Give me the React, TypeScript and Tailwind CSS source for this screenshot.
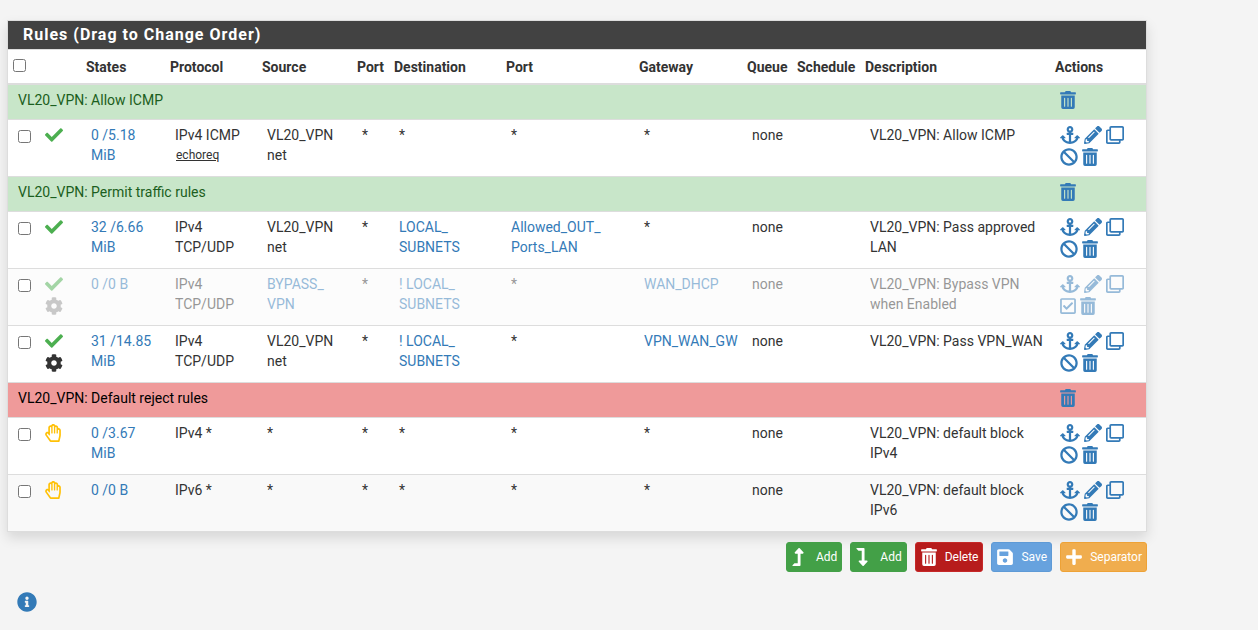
import { Fragment, PropsWithChildren } from 'react';
import { IconType } from 'react-icons';
import {
  FaAnchor,
  FaBan,
  FaCheck,
  FaCog,
  FaInfoCircle,
  FaLevelDownAlt,
  FaLevelUpAlt,
  FaPencilAlt,
  FaPlus,
  FaRegCheckSquare,
  FaRegClone,
  FaRegHandPaper,
  FaSave,
  FaTrashAlt,
} from 'react-icons/fa';

type Rule = {
  id: string;
  action: 'pass' | 'reject';
  advanced?: boolean;
  disabled?: boolean;
  striped?: boolean;
  states: string;
  protocol: string;
  icmpType?: string;
  source: string;
  sourceAlias?: boolean;
  destination: string;
  port: string;
  gateway: string;
  description: string;
};

type Group = {
  title: string;
  color: 'green' | 'red';
  rules: Rule[];
};

const groups: Group[] = [
  {
    title: 'VL20_VPN: Allow ICMP',
    color: 'green',
    rules: [
      { id: 'icmp', action: 'pass', states: '0 /5.18\nMiB', protocol: 'IPv4 ICMP', icmpType: 'echoreq', source: 'VL20_VPN\nnet', destination: '*', port: '*', gateway: '*', description: 'VL20_VPN: Allow ICMP' },
    ],
  },
  {
    title: 'VL20_VPN: Permit traffic rules',
    color: 'green',
    rules: [
      { id: 'lan', action: 'pass', states: '32 /6.66\nMiB', protocol: 'IPv4\nTCP/UDP', source: 'VL20_VPN\nnet', destination: 'LOCAL_\nSUBNETS', port: 'Allowed_OUT_\nPorts_LAN', gateway: '*', description: 'VL20_VPN: Pass approved\nLAN' },
      { id: 'bypass', action: 'pass', advanced: true, disabled: true, states: '0 /0 B', protocol: 'IPv4\nTCP/UDP', source: 'BYPASS_\nVPN', sourceAlias: true, destination: '! LOCAL_\nSUBNETS', port: '*', gateway: 'WAN_DHCP', description: 'VL20_VPN: Bypass VPN\nwhen Enabled' },
      { id: 'wan', action: 'pass', advanced: true, states: '31 /14.85\nMiB', protocol: 'IPv4\nTCP/UDP', source: 'VL20_VPN\nnet', destination: '! LOCAL_\nSUBNETS', port: '*', gateway: 'VPN_WAN_GW', description: 'VL20_VPN: Pass VPN_WAN' },
    ],
  },
  {
    title: 'VL20_VPN: Default reject rules',
    color: 'red',
    rules: [
      { id: 'block4', action: 'reject', states: '0 /3.67\nMiB', protocol: 'IPv4 *', source: '*', destination: '*', port: '*', gateway: '*', description: 'VL20_VPN: default block\nIPv4' },
      { id: 'block6', action: 'reject', striped: true, states: '0 /0 B', protocol: 'IPv6 *', source: '*', destination: '*', port: '*', gateway: '*', description: 'VL20_VPN: default block\nIPv6' },
    ],
  },
];

const IconLink = ({ icon: Icon, label, width = 'w-[18px]' }: { icon: IconType; label: string; width?: string }) => (
  <a href="#" title={label} aria-label={label} className="text-[#337ab7]">
    <Icon className={`block h-[18px] ${width}`} />
  </a>
);

const Head = ({ children }: PropsWithChildren) => (
  <th className="px-[5px] pt-[7px] pb-[6px] text-left font-bold">{children}</th>
);

const Cell = ({ children, faded }: PropsWithChildren<{ faded?: boolean }>) => (
  <td className={`pt-[5px] pl-2.5 align-top whitespace-pre-line ${faded ? 'opacity-50' : ''}`}>{children}</td>
);

// Aliases and gateways link to their own page, a plain "*" does not
const Value = ({ text, link = text !== '*' }: { text: string; link?: boolean }) =>
  link ? <a href="#" className="text-[#337ab7]">{text}</a> : <>{text}</>;

const RuleRow = ({ rule }: { rule: Rule }) => (
  <tr className={`h-[57px] border-t border-[#ddd] ${rule.disabled ? 'bg-[#fcfcfc]' : rule.striped ? 'bg-[#f9f9f9]' : 'bg-white'}`}>
    <td className="pt-[10px] pl-2.5 align-top">
      <input type="checkbox" aria-label={`Select ${rule.description}`} className="block size-[13px]" />
    </td>
    <td className={`pt-[6px] pl-2.5 align-top ${rule.disabled ? 'opacity-50' : ''}`}>
      <div className="flex flex-col items-start gap-1">
        {rule.action === 'pass'
          ? <FaCheck className="size-[18px] text-[#4caf50]" />
          : <FaRegHandPaper className="h-[18px] w-4 text-[#ffc107]" />}
        {rule.advanced && <FaCog className={`size-[18px] text-[#333] ${rule.disabled ? 'opacity-50' : ''}`} />}
      </div>
    </td>
    <Cell faded={rule.disabled}><Value text={rule.states} /></Cell>
    <Cell faded={rule.disabled}>
      {rule.protocol}
      {rule.icmpType && <div className="pl-px text-xs leading-5 underline">{rule.icmpType}</div>}
    </Cell>
    <Cell faded={rule.disabled}><Value text={rule.source} link={!!rule.sourceAlias} /></Cell>
    <Cell faded={rule.disabled}>*</Cell>
    <Cell faded={rule.disabled}><Value text={rule.destination} /></Cell>
    <Cell faded={rule.disabled}><Value text={rule.port} /></Cell>
    <Cell faded={rule.disabled}><Value text={rule.gateway} /></Cell>
    <Cell faded={rule.disabled}>none</Cell>
    <Cell faded={rule.disabled} />
    <Cell faded={rule.disabled}>{rule.description}</Cell>
    <td className={`pt-[6px] pr-2 pl-2.5 align-top ${rule.disabled ? 'opacity-50' : ''}`}>
      <div className="flex flex-wrap gap-1">
        <IconLink icon={FaAnchor} width="w-5" label="Move checked rules above this one" />
        <IconLink icon={FaPencilAlt} label="Edit" />
        <IconLink icon={FaRegClone} label="Copy" />
        {rule.disabled
          ? <IconLink icon={FaRegCheckSquare} width="w-4" label="Enable" />
          : <IconLink icon={FaBan} label="Disable" />}
        <IconLink icon={FaTrashAlt} width="w-4" label="Delete this rule" />
      </div>
    </td>
  </tr>
);

const ActionButton = ({ icon: Icon, width = 'w-4', className, children }: PropsWithChildren<{ icon: IconType; width?: string; className: string }>) => (
  <button type="button" className={`flex h-[30px] items-center gap-2 rounded-[3px] border pr-1 pl-[5px] text-xs text-white ${className}`}>
    <span className="w-4">
      <Icon className={`h-[18px] ${width}`} />
    </span>
    {children}
  </button>
);

export default function App() {
  return (
    <main className="min-h-screen bg-[#f4f4f4] pt-5 pr-[111px] pl-[7px] font-[Roboto,sans-serif] text-sm leading-5 text-[#333]">
      <section className="border border-[#ddd] bg-white shadow-[0_6px_12px_rgba(0,0,0,0.12)]">
        <h2 className="border-b border-[#ddd] bg-[#424242] px-[15px] py-1 text-base leading-5 font-bold tracking-[1px] text-white">
          Rules (Drag to Change Order)
        </h2>
        <table className="w-full table-fixed border-collapse">
          <colgroup>
            <col className="w-[27px]" />
            <col className="w-[46px]" />
            <col className="w-[84px]" />
            <col className="w-[92px]" />
            <col className="w-[95px]" />
            <col className="w-[37px]" />
            <col className="w-[112px]" />
            <col className="w-[133px]" />
            <col className="w-[108px]" />
            <col className="w-[50px]" />
            <col className="w-[68px]" />
            <col />
            <col className="w-[96px]" />
          </colgroup>
          <thead>
            <tr className="border-b-2 border-[#ddd]">
              <th className="pt-[9px] pl-[5px] align-top">
                <input type="checkbox" aria-label="Select all rules" className="block size-[13px]" />
              </th>
              <th />
              <Head>States</Head>
              <Head>Protocol</Head>
              <Head>Source</Head>
              <Head>Port</Head>
              <Head>Destination</Head>
              <Head>Port</Head>
              <Head>Gateway</Head>
              <Head>Queue</Head>
              <Head>Schedule</Head>
              <Head>Description</Head>
              <Head>Actions</Head>
            </tr>
          </thead>
          <tbody>
            {groups.map(group => (
              <Fragment key={group.title}>
                <tr className={`h-[35px] border-t border-[#ddd] ${group.color === 'green' ? 'bg-[#c8e6c9] text-[#1b5e20]' : 'bg-[#ef9a9a] text-black'}`}>
                  <td colSpan={12} className="pt-[5px] pl-2.5 align-top">{group.title}</td>
                  <td className="pt-[6px] pl-2.5 align-top">
                    <IconLink icon={FaTrashAlt} width="w-4" label="Delete separator" />
                  </td>
                </tr>
                {group.rules.map(rule => <RuleRow key={rule.id} rule={rule} />)}
              </Fragment>
            ))}
          </tbody>
        </table>
      </section>
      <nav aria-label="Rule actions" className="mt-[10px] flex justify-end gap-2">
        <ActionButton icon={FaLevelUpAlt} width="w-3" className="border-[#43a047] bg-[#43a047]">Add</ActionButton>
        <ActionButton icon={FaLevelDownAlt} width="w-3" className="border-[#43a047] bg-[#43a047]">Add</ActionButton>
        <ActionButton icon={FaTrashAlt} className="border-[#c62828] bg-[#b71c1c]">Delete</ActionButton>
        <ActionButton icon={FaSave} className="border-[#5e9ad6] bg-[#67a2de]">Save</ActionButton>
        <ActionButton icon={FaPlus} className="border-[#eea236] bg-[#f0ad4e]">Separator</ActionButton>
      </nav>
      <button type="button" aria-label="Show information" className="mt-5 ml-2.5 block text-[#337ab7]">
        <FaInfoCircle className="size-5" />
      </button>
    </main>
  );
}
